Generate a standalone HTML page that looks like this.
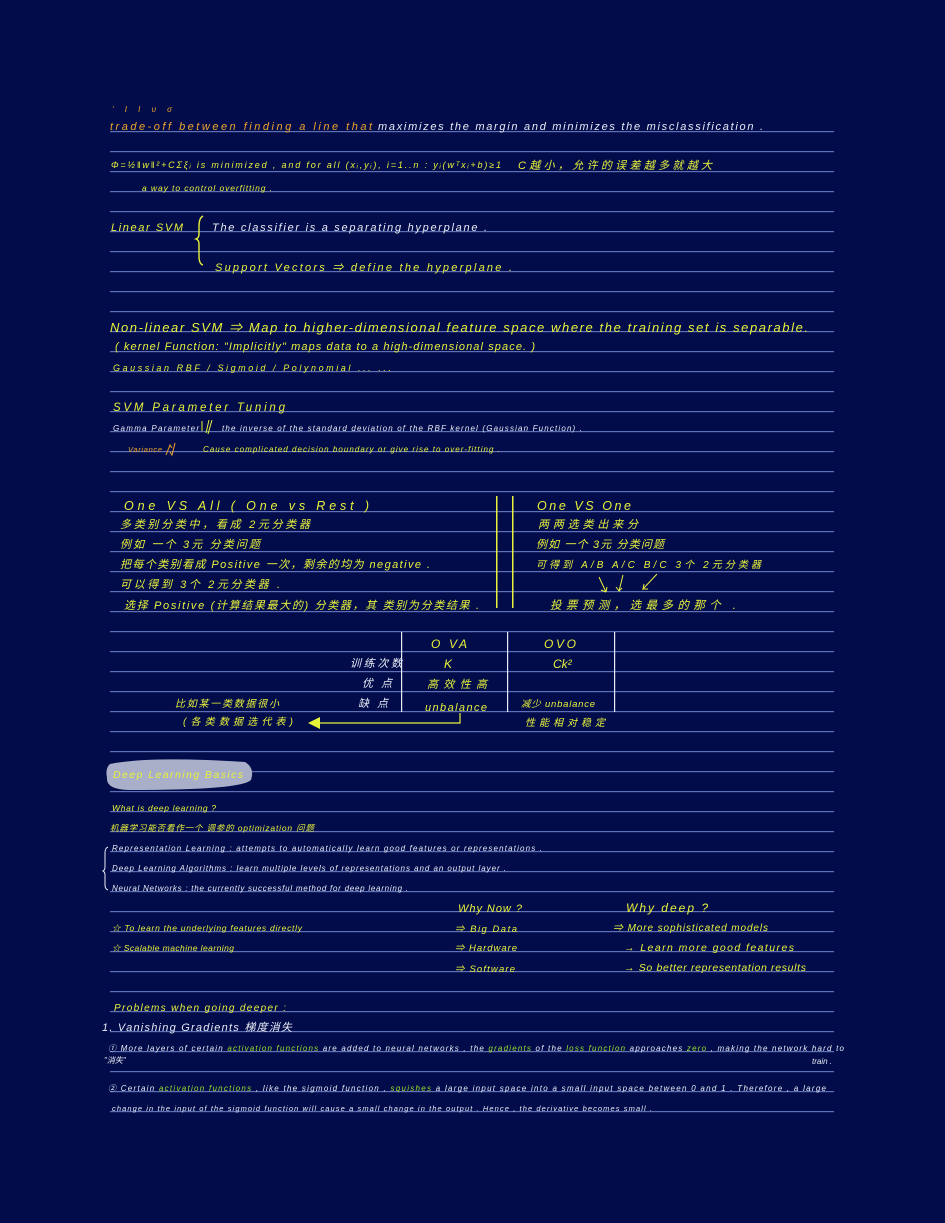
<!DOCTYPE html>
<html><head><meta charset="utf-8"><style>
html,body{margin:0;padding:0;background:#020c4b;}
svg{display:block}
text{font-family:"Liberation Sans","Noto Sans CJK SC",sans-serif;font-style:italic;}
.y{fill:#e8f23a}.o{fill:#f0a42a}.w{fill:#e8ecf5}.g{fill:#9be22a}
</style></head><body>
<svg width="945" height="1223" viewBox="0 0 945 1223" xmlns="http://www.w3.org/2000/svg">
<defs>
<pattern id="ln" x="0" y="131" width="945" height="20" patternUnits="userSpaceOnUse">
<rect x="0" y="0" width="945" height="1.2" fill="#5f71b6"/>
</pattern>
</defs>
<rect x="0" y="0" width="945" height="1223" fill="#020c4b"/>
<rect x="110" y="131" width="724" height="982" fill="url(#ln)"/>

<text x="112" y="112" font-size="8" class="o" textLength="60" lengthAdjust="spacing">' I I υ σ</text>
<text x="110" y="130" font-size="11" class="o" textLength="262" lengthAdjust="spacing">trade-off between finding a line that</text>
<text x="378" y="130" font-size="11" class="w" textLength="385" lengthAdjust="spacing">maximizes the margin and minimizes the misclassification .</text>

<text x="111" y="168" font-size="9" class="y" textLength="390" lengthAdjust="spacing">Φ=½‖w‖²+CΣξᵢ is minimized , and for all (xᵢ,yᵢ), i=1..n : yᵢ(wᵀxᵢ+b)≥1</text>
<text x="518" y="169" font-size="11" class="y" textLength="194" lengthAdjust="spacing">C越小，允许的误差越多就越大</text>
<text x="142" y="191" font-size="8.5" class="y" textLength="130" lengthAdjust="spacing">a way to control overfitting .</text>

<text x="111" y="231" font-size="11" class="y" textLength="72" lengthAdjust="spacing">Linear SVM</text>
<path d="M203 216 q-4 2 -4 10 v8 q0 4 -3 5 q3 1 3 5 v12 q0 8 4 9" stroke="#e8f23a" stroke-width="1.4" fill="none"/>
<text x="212" y="231" font-size="11" class="w" textLength="275" lengthAdjust="spacing">The classifier is a separating hyperplane .</text>
<text x="215" y="271" font-size="11" class="y" textLength="297" lengthAdjust="spacing">Support Vectors ⇒ define the hyperplane .</text>

<text x="110" y="332" font-size="13" class="y" textLength="698" lengthAdjust="spacing">Non-linear SVM ⇒ Map to higher-dimensional feature space where the training set is separable.</text>
<text x="115" y="350" font-size="11" class="y" textLength="420" lengthAdjust="spacing">( kernel Function: "Implicitly" maps data to a high-dimensional space. )</text>
<text x="113" y="371" font-size="9" class="y" textLength="278" lengthAdjust="spacing">Gaussian RBF /  Sigmoid  / Polynomial ... ...</text>

<text x="113" y="411" font-size="11.5" class="y" textLength="172" lengthAdjust="spacing">SVM Parameter Tuning</text>
<text x="113" y="431" font-size="8" class="w" textLength="86" lengthAdjust="spacing">Gamma Parameter</text>
<path d="M202 421 v10 M206 433 l3 -13 M212 420 l-4 14" stroke="#e8f23a" stroke-width="1" fill="none"/>
<text x="222" y="431" font-size="8" class="w" textLength="360" lengthAdjust="spacing">the inverse of the standard deviation of the RBF kernel (Gaussian Function) .</text>
<text x="128" y="452" font-size="7.5" class="o" textLength="34" lengthAdjust="spacing">Variance</text>
<path d="M166 455 l4 -10 l2 3 M175 443 l-3 12 l-2 -3" stroke="#f0a42a" stroke-width="1" fill="none"/>
<text x="203" y="452" font-size="8" class="y" textLength="297" lengthAdjust="spacing">Cause complicated decision boundary or give rise to over-fitting .</text>

<text x="124" y="510" font-size="12.5" class="y" textLength="245" lengthAdjust="spacing">One  VS  All  ( One  vs  Rest )</text>
<text x="120" y="528" font-size="11" class="y" textLength="190" lengthAdjust="spacing">多类别分类中，看成 2元分类器</text>
<text x="120" y="548" font-size="11" class="y" textLength="140" lengthAdjust="spacing">例如 一个 3元 分类问题</text>
<text x="120" y="568" font-size="11" class="y" textLength="310" lengthAdjust="spacing">把每个类别看成 Positive 一次，剩余的均为 negative .</text>
<text x="120" y="588" font-size="11" class="y" textLength="160" lengthAdjust="spacing">可以得到 3个 2元分类器 .</text>
<text x="124" y="609" font-size="11" class="y" textLength="355" lengthAdjust="spacing">选择 Positive (计算结果最大的) 分类器，其 类别为分类结果 .</text>
<rect x="496" y="496" width="1.5" height="112" fill="#e8f23a"/>
<rect x="512" y="496" width="1.5" height="112" fill="#e8f23a"/>
<text x="537" y="510" font-size="12.5" class="y" textLength="94" lengthAdjust="spacing">One  VS  One</text>
<text x="538" y="528" font-size="11" class="y" textLength="100" lengthAdjust="spacing">两两选类出来分</text>
<text x="536" y="548" font-size="11" class="y" textLength="128" lengthAdjust="spacing">例如 一个 3元 分类问题</text>
<text x="536" y="568" font-size="10" class="y" textLength="225" lengthAdjust="spacing">可得到 A/B  A/C  B/C 3个 2元分类器</text>
<path d="M599 577 l7 15 M606 592 l-5 -2 M606 592 l1 -5 M623 575 l-4 16 l-3 -4 M619 591 l3 -3 M657 574 l-14 15 l1 -5 M643 589 l5 0" stroke="#e8f23a" stroke-width="1" fill="none"/>
<text x="550" y="609" font-size="11.5" class="y" textLength="186" lengthAdjust="spacing">投票预测，选最多的那个 .</text>

<rect x="401" y="632" width="1.2" height="80" fill="#e8ecf5"/>
<rect x="507" y="632" width="1.2" height="80" fill="#e8ecf5"/>
<rect x="614" y="632" width="1.2" height="80" fill="#e8ecf5"/>
<text x="431" y="648" font-size="12" class="y" textLength="36" lengthAdjust="spacing">O VA</text>
<text x="544" y="648" font-size="12" class="y" textLength="32" lengthAdjust="spacing">OVO</text>
<text x="350" y="667" font-size="11" class="w" textLength="52" lengthAdjust="spacing">训练次数</text>
<text x="444" y="668" font-size="12" class="y">K</text>
<text x="553" y="668" font-size="12" class="y">Ck²</text>
<text x="362" y="687" font-size="11" class="w" textLength="30" lengthAdjust="spacing">优点</text>
<text x="427" y="688" font-size="11" class="y" textLength="60" lengthAdjust="spacing">高效性高</text>
<text x="358" y="707" font-size="11" class="w" textLength="30" lengthAdjust="spacing">缺点</text>
<text x="425" y="711" font-size="11" class="y" textLength="62" lengthAdjust="spacing">unbalance</text>
<text x="521" y="707" font-size="9.5" class="y" textLength="74" lengthAdjust="spacing">减少 unbalance</text>
<text x="175" y="707" font-size="10" class="y" textLength="104" lengthAdjust="spacing">比如某一类数据很小</text>
<text x="183" y="725" font-size="10" class="y" textLength="110" lengthAdjust="spacing">(各类数据选代表)</text>
<path d="M460 713 v10 H318" stroke="#e8f23a" stroke-width="1.2" fill="none"/>
<path d="M308 723 l12 -6 v12 z" fill="#e8f23a"/>
<text x="525" y="726" font-size="10" class="y" textLength="80" lengthAdjust="spacing">性能相对稳定</text>

<path d="M110 764 q40 -8 135 -2 q10 6 6 18 q-10 10 -120 10 q-25 0 -24 -12 q-2 -10 3 -14 z" fill="#a9afc8"/>
<text x="113" y="778" font-size="10.5" class="y" textLength="130" lengthAdjust="spacing">Deep Learning Basics</text>
<text x="112" y="811" font-size="8.5" class="y" textLength="104" lengthAdjust="spacing">What is deep learning ?</text>
<text x="110" y="831" font-size="8.5" class="y" textLength="204" lengthAdjust="spacing">机器学习能否看作一个 调参的 optimization 问题</text>
<path d="M108 847 q-3 1 -3 6 v14 q0 3 -2 4 q2 1 2 4 v10 q0 4 3 5" stroke="#e8ecf5" stroke-width="1" fill="none"/>
<text x="112" y="851" font-size="8" class="w" textLength="430" lengthAdjust="spacing">Representation Learning : attempts to automatically learn good features or representations .</text>
<text x="112" y="871" font-size="8" class="w" textLength="394" lengthAdjust="spacing">Deep Learning Algorithms : learn multiple levels of representations and an output layer .</text>
<text x="112" y="891" font-size="8" class="w" textLength="296" lengthAdjust="spacing">Neural Networks : the currently successful method for deep learning .</text>

<text x="458" y="912" font-size="11" class="y" textLength="64" lengthAdjust="spacing">Why Now ?</text>
<text x="626" y="912" font-size="12" class="y" textLength="82" lengthAdjust="spacing">Why deep ?</text>
<text x="112" y="931" font-size="8.5" class="y" textLength="190" lengthAdjust="spacing">☆ To learn the underlying features directly</text>
<text x="112" y="951" font-size="8.5" class="y" textLength="122" lengthAdjust="spacing">☆ Scalable machine learning</text>
<text x="455" y="932" font-size="9.5" class="y" textLength="62" lengthAdjust="spacing">⇒ Big Data</text>
<text x="455" y="951" font-size="9.5" class="y" textLength="62" lengthAdjust="spacing">⇒ Hardware</text>
<text x="455" y="972" font-size="9.5" class="y" textLength="60" lengthAdjust="spacing">⇒ Software</text>
<text x="613" y="931" font-size="10" class="y" textLength="155" lengthAdjust="spacing">⇒ More sophisticated models</text>
<text x="624" y="951" font-size="10.5" class="y" textLength="170" lengthAdjust="spacing">→ Learn more good features</text>
<text x="624" y="971" font-size="10.5" class="y" textLength="182" lengthAdjust="spacing">→ So better representation results</text>

<text x="114" y="1011" font-size="10" class="y" textLength="172" lengthAdjust="spacing">Problems when going deeper :</text>
<text x="102" y="1031" font-size="11" class="w" textLength="190" lengthAdjust="spacing">1. Vanishing Gradients 梯度消失</text>
<text x="108" y="1051" font-size="8" class="w" textLength="736" lengthAdjust="spacing"><tspan>① More layers of certain </tspan><tspan class="g">activation functions</tspan><tspan> are added to neural networks , the </tspan><tspan class="g">gradients</tspan><tspan> of the </tspan><tspan class="g">loss function</tspan><tspan> approaches </tspan><tspan class="g">zero</tspan><tspan> , making the network hard to</tspan></text>
<text x="104" y="1063" font-size="8" class="w">"消失"</text>
<text x="812" y="1064" font-size="8" class="w">train .</text>
<text x="108" y="1091" font-size="8" class="w" textLength="718" lengthAdjust="spacing"><tspan>② Certain </tspan><tspan class="g">activation functions</tspan><tspan> , like the sigmoid function , </tspan><tspan class="g">squishes</tspan><tspan> a large input space into a small input space between 0 and 1 . Therefore , a large</tspan></text>
<text x="112" y="1111" font-size="7.5" class="w" textLength="540" lengthAdjust="spacing">change in the input of the sigmoid function will cause a small change in the output . Hence , the derivative becomes small .</text>
</svg>
</body></html>
